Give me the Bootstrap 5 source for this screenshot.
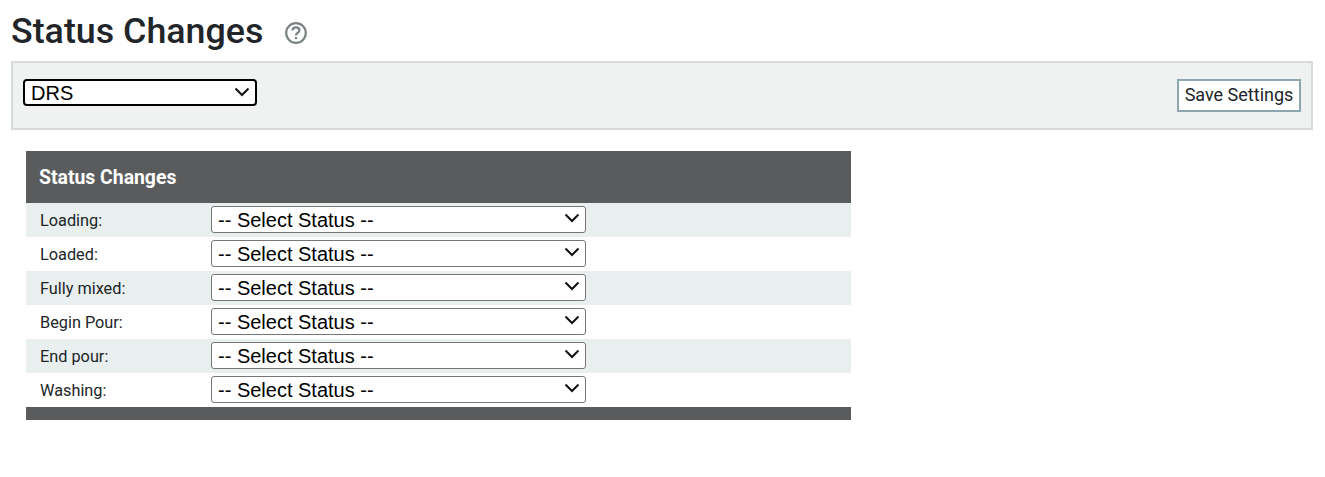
<!DOCTYPE html>
<html lang="en">
<head>
<meta charset="utf-8">
<title>Status Changes</title>
<link rel="stylesheet" href="https://cdn.jsdelivr.net/npm/bootstrap@5.3.0/dist/css/bootstrap.min.css">
<style>
body { font-family: Roboto, sans-serif; background: #fff; color: #212529; }
.page-wrap { padding: 0 12px 0 11px; }
.page-title { font-family: Roboto, sans-serif; font-size: 35.8px; font-weight: 500; line-height: 40px; margin: 11px 0 10px; color: #212529; }
.help-icon { margin-left: 21px; vertical-align: -2px; }
.filter-panel { background: #f0f2f2; border: 2px solid #d8dbdb; height: 69px; padding: 16px 10px 0 10px; }
.plant-select, .status-select {
  appearance: none; -webkit-appearance: none;
  background: #fff url("data:image/svg+xml,%3Csvg xmlns='http://www.w3.org/2000/svg' width='16' height='10' viewBox='0 0 16 10'%3E%3Cpath d='M1.500 1.500 8 8l6.500-6.500' fill='none' stroke='%23111' stroke-width='2'/%3E%3C/svg%3E") no-repeat;
  font-family: "Liberation Sans", sans-serif; font-size: 20px; line-height: 23px; color: #000; padding: 1px 0 0 6px;
}
.plant-select { width: 234px; height: 27px; border: 2px solid #000; border-radius: 4px; background-position: right 5px top 6px; }
.save-btn { height: 33px; width: 124px; background: #fff; border: 2px solid #8ea6ad; border-radius: 0; font-size: 18px; color: #212529; padding: 0 0 2px; line-height: 1; }
.status-panel { width: 825px; margin: 21px 0 0 15px; }
.status-head { background: #5a5b5d; color: #fff; height: 52px; padding-left: 13px; font-size: 19.400px; font-weight: 700; line-height: 53px; }
.status-row { height: 34px; font-size: 16.300px; color: #212529; }
.status-row:nth-child(odd) { background: #e9eeee; }
.status-label { width: 185px; padding-left: 14px; padding-top: 2px; }
.status-select { width: 375px; height: 27px; margin-bottom: 1px; border: 1px solid #767676; border-radius: 3px; background-position: right 5px top 6px; }
.status-foot { background: #5a5b5d; height: 13px; }
</style>
</head>
<body>
<div class="page-wrap">
  <h1 class="page-title">Status Changes<svg class="help-icon" width="24" height="24" viewBox="0 0 24 24" fill="none" aria-hidden="true"><circle cx="12" cy="12" r="9.800" stroke="#7b8284" stroke-width="2.200"/><path d="M8.600 9.600c0-2 1.500-3.200 3.400-3.200s3.400 1.200 3.400 3c0 2.600-3.400 2.500-3.400 5" stroke="#7b8284" stroke-width="2.200" fill="none"/><rect x="10.900" y="16" width="2.200" height="2.200" fill="#7b8284"/></svg></h1>
  <div class="filter-panel d-flex justify-content-between align-items-start">
    <select class="plant-select"><option>DRS</option></select>
    <button type="button" class="save-btn">Save Settings</button>
  </div>
  <div class="status-panel">
    <div class="status-head">Status Changes</div>
    <div>
      <div class="status-row d-flex align-items-center"><div class="status-label">Loading:</div><select class="status-select"><option>-- Select Status --</option></select></div>
      <div class="status-row d-flex align-items-center"><div class="status-label">Loaded:</div><select class="status-select"><option>-- Select Status --</option></select></div>
      <div class="status-row d-flex align-items-center"><div class="status-label">Fully mixed:</div><select class="status-select"><option>-- Select Status --</option></select></div>
      <div class="status-row d-flex align-items-center"><div class="status-label">Begin Pour:</div><select class="status-select"><option>-- Select Status --</option></select></div>
      <div class="status-row d-flex align-items-center"><div class="status-label">End pour:</div><select class="status-select"><option>-- Select Status --</option></select></div>
      <div class="status-row d-flex align-items-center"><div class="status-label">Washing:</div><select class="status-select"><option>-- Select Status --</option></select></div>
    </div>
    <div class="status-foot"></div>
  </div>
</div>
<script src="https://cdn.jsdelivr.net/npm/bootstrap@5.3.0/dist/js/bootstrap.bundle.min.js"></script>
</body>
</html>
